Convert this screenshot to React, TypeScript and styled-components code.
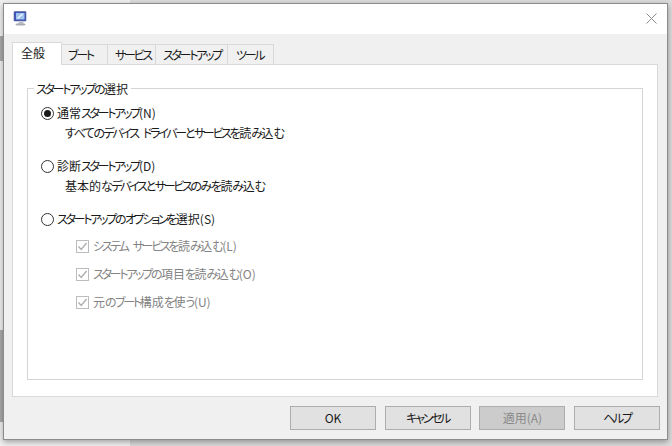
import React from 'react';
import styled, { createGlobalStyle } from 'styled-components';

const GlobalStyle = createGlobalStyle`
  html, body {
    margin: 0;
    padding: 0;
    width: 672px;
    height: 446px;
    overflow: hidden;
    background: #e6e6e6;
  }
  body {
    font-family: "Noto Sans CJK JP", "Liberation Sans", sans-serif;
    font-size: 12px;
    font-feature-settings: "palt";
    color: #1a1a1a;
  }
`;

const Desktop = styled.div`
  position: relative;
  width: 672px;
  height: 446px;
  box-sizing: border-box;
  padding: 3px 4px 6px 3px;
  background: linear-gradient(90deg, #f1f1f1 0, #f1f1f1 130px, #dcdcdc 130px);
`;

const Patch = styled.div<{ $top: number; $height: number }>`
  position: absolute;
  left: 0;
  top: ${(p) => p.$top}px;
  width: 3px;
  height: ${(p) => p.$height}px;
  background: #ababab;
`;

const Window = styled.div`
  position: relative;
  height: 100%;
  box-sizing: border-box;
  display: flex;
  flex-direction: column;
  background: #f0f0f0;
  border: 1px solid #8c8c8c;
  box-shadow: 0 2px 6px rgba(0, 0, 0, 0.35);
`;

const TitleBar = styled.div`
  height: 30px;
  flex: none;
  box-sizing: border-box;
  display: flex;
  align-items: center;
  justify-content: space-between;
  padding: 0 10px 2px 9px;
  background: #fff;
`;

const Body = styled.div`
  flex: 1;
  display: flex;
  flex-direction: column;
  padding: 8px 7px 0 8px;
`;

const Tabs = styled.div`
  display: flex;
  align-items: flex-end;
  height: 22px;
  position: relative;
  z-index: 1;
`;

const Tab = styled.div<{ $width: number; $pad: number; $active?: boolean }>`
  width: ${(p) => p.$width}px;
  height: ${(p) => (p.$active ? 23 : 20)}px;
  margin-bottom: ${(p) => (p.$active ? -1 : 0)}px;
  box-sizing: border-box;
  display: flex;
  align-items: center;
  padding: 0 0 ${(p) => (p.$active ? 3 : 0)}px ${(p) => p.$pad}px;
  background: ${(p) => (p.$active ? '#fff' : '#f0f0f0')};
  border: 1px solid #d9d9d9;
  border-bottom: none;
  border-left: ${(p) => (p.$active ? '1px solid #d9d9d9' : 'none')};
  line-height: 16px;
  white-space: nowrap;
`;

const Panel = styled.div`
  width: 646px;
  height: 333px;
  box-sizing: border-box;
  background: #fff;
  border: 1px solid #d9d9d9;
  padding: 23px 14px 16px 14px;
`;

const Group = styled.div`
  height: 292px;
  box-sizing: border-box;
  border: 1px solid #d5d5d5;
  position: relative;
`;

const GroupTitle = styled.div`
  position: absolute;
  left: 6px;
  top: -8px;
  padding: 0 3px 0 2px;
  background: #fff;
  line-height: 16px;
  white-space: nowrap;
`;

const Options = styled.div`
  display: flex;
  flex-direction: column;
  padding: 15px 0 0 13px;
`;

const Option = styled.div`
  display: flex;
  align-items: center;
  gap: 3px;
  height: 18px;
  line-height: 18px;
  white-space: nowrap;
`;

const Note = styled.div<{ $after: number }>`
  height: 18px;
  line-height: 18px;
  margin: 2px 0 ${(p) => p.$after}px 24px;
  white-space: nowrap;
`;

const Radio = styled.span<{ $on?: boolean }>`
  width: 13px;
  height: 13px;
  flex: none;
  box-sizing: border-box;
  border: 1px solid #333;
  border-radius: 50%;
  display: flex;
  align-items: center;
  justify-content: center;
  &::after {
    content: '';
    display: ${(p) => (p.$on ? 'block' : 'none')};
    width: 7px;
    height: 7px;
    border-radius: 50%;
    background: #1a1a1a;
  }
`;

const SubOptions = styled.div`
  display: flex;
  flex-direction: column;
  gap: 10px;
  margin: 9px 0 0 35px;
`;

const SubOption = styled.div`
  display: flex;
  align-items: center;
  gap: 4px;
  height: 18px;
  line-height: 18px;
  color: #838383;
  white-space: nowrap;
`;

const Check = styled.span`
  width: 13px;
  height: 13px;
  flex: none;
  box-sizing: border-box;
  border: 1px solid #bcbcbc;
  display: flex;
  align-items: center;
  justify-content: center;
`;

const Footer = styled.div`
  display: flex;
  justify-content: flex-end;
  gap: 8.67px;
  margin-top: 9px;
`;

const Button = styled.div<{ $disabled?: boolean }>`
  width: 86px;
  height: 24px;
  box-sizing: border-box;
  display: flex;
  align-items: center;
  justify-content: center;
  background: ${(p) => (p.$disabled ? '#cccccc' : '#e1e1e1')};
  border: 1px solid #adadad;
  color: ${(p) => (p.$disabled ? '#8a8a8a' : '#1a1a1a')};
  line-height: 16px;
  white-space: nowrap;
`;

// the reference font sets kana much narrower than Noto does
const Run = styled.span<{ $squeeze: number }>`
  letter-spacing: ${(p) => p.$squeeze}px;
`;

const squeezeOf = (run: string) => {
  if (/^\s+$/.test(run)) return 2.5;
  if (/^[\u30a0-\u30ff]/.test(run)) return -2.3;
  if (/^[\u3040-\u309f]/.test(run)) return -1.5;
  return 0;
};

const Label = ({ text }: { text: string }) => (
  <span>
    {(text.match(/[\u30a0-\u30ff]+|[\u3040-\u309f]+|\s+|[^\u3040-\u30ff\s]+/g) ?? []).map((run, i) => (
      <Run key={i} $squeeze={squeezeOf(run)}>
        {run}
      </Run>
    ))}
  </span>
);

const AppIcon = () => (
  <svg width="15" height="15" viewBox="0 0 15 15">
    <rect x="1" y="0.5" width="12" height="9.5" rx="0.5" fill="#3f55b5" stroke="#59649a" strokeWidth="0.6" />
    <rect x="3" y="2" width="8.5" height="6.5" fill="#9fc4ee" />
    <path d="M4.5 7.5L9.5 3" stroke="#f4f8ff" strokeWidth="1.2" />
    <path d="M6 11h4l1 1.5H5z" fill="#b9bcc4" />
    <ellipse cx="7.5" cy="13.4" rx="5" ry="1.2" fill="#a8abb3" />
  </svg>
);

const CloseIcon = () => (
  <svg width="11" height="11" viewBox="0 0 11 11">
    <path d="M0.5 0.5L10.5 10.5M10.5 0.5L0.5 10.5" stroke="#8a8a8a" strokeWidth="1" />
  </svg>
);

const CheckMark = () => (
  <svg width="11" height="11" viewBox="0 0 11 11">
    <path d="M1.5 5.5L4.2 8.4L9.6 2" fill="none" stroke="#b0b0b0" strokeWidth="1.5" />
  </svg>
);

const tabs = [
  { label: '全般', width: 50, pad: 8, active: true },
  { label: 'ブート', width: 46, pad: 6 },
  { label: 'サービス', width: 48, pad: 7 },
  { label: 'スタートアップ', width: 72, pad: 7 },
  { label: 'ツール', width: 46, pad: 8 },
];

const subOptions = [
  'システム サービスを読み込む(L)',
  'スタートアップの項目を読み込む(O)',
  '元のブート構成を使う(U)',
];

const buttons = [
  { label: 'OK' },
  { label: 'キャンセル' },
  { label: '適用(A)', disabled: true },
  { label: 'ヘルプ' },
];

export default function App() {
  return (
    <Desktop>
      <GlobalStyle />
      <Patch $top={36} $height={25} />
      <Patch $top={330} $height={92} />
      <Window>
        <TitleBar>
          <AppIcon />
          <CloseIcon />
        </TitleBar>
        <Body>
          <Tabs>
            {tabs.map((t) => (
              <Tab key={t.label} $width={t.width} $pad={t.pad} $active={t.active}>
                <Label text={t.label} />
              </Tab>
            ))}
          </Tabs>
          <Panel>
            <Group>
              <GroupTitle>
                <Label text="スタートアップの選択" />
              </GroupTitle>
              <Options>
                <Option>
                  <Radio $on />
                  <Label text="通常スタートアップ(N)" />
                </Option>
                <Note $after={15}>
                  <Label text="すべてのデバイス ドライバーとサービスを読み込む" />
                </Note>
                <Option>
                  <Radio />
                  <Label text="診断スタートアップ(D)" />
                </Option>
                <Note $after={15}>
                  <Label text="基本的なデバイスとサービスのみを読み込む" />
                </Note>
                <Option>
                  <Radio />
                  <Label text="スタートアップのオプションを選択(S)" />
                </Option>
                <SubOptions>
                  {subOptions.map((s) => (
                    <SubOption key={s}>
                      <Check>
                        <CheckMark />
                      </Check>
                      <Label text={s} />
                    </SubOption>
                  ))}
                </SubOptions>
              </Options>
            </Group>
          </Panel>
          <Footer>
            {buttons.map((b) => (
              <Button key={b.label} $disabled={b.disabled}>
                <Label text={b.label} />
              </Button>
            ))}
          </Footer>
        </Body>
      </Window>
    </Desktop>
  );
}
